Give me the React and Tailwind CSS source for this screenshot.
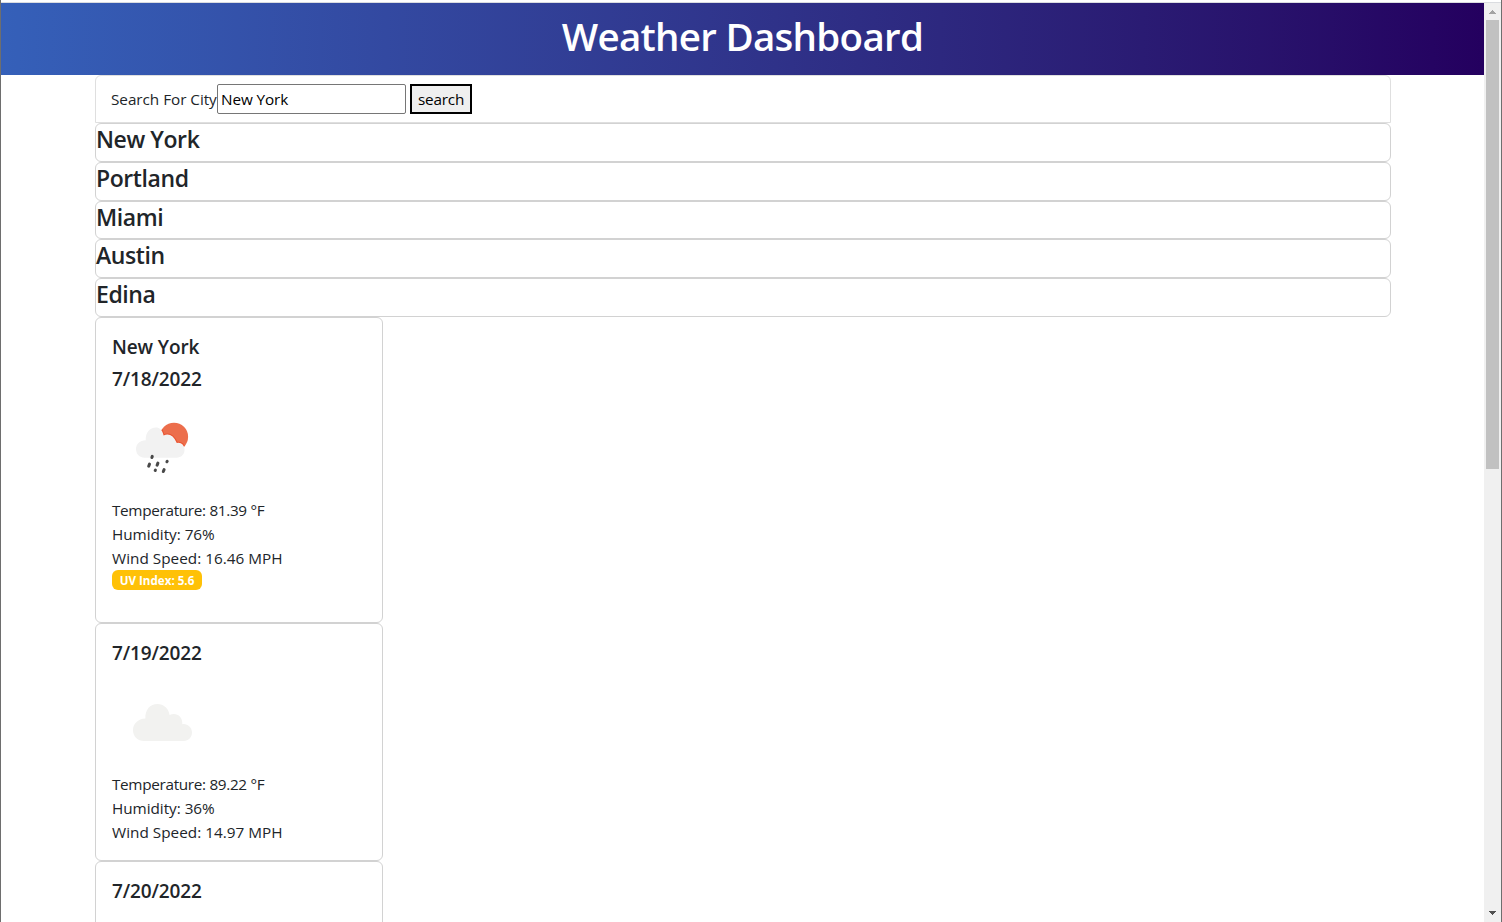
const cities = ["New York", "Portland", "Miami", "Austin", "Edina"];

const rainCloud =
  "M32.5 59.7C27.6 59.7 24 56 24 51C24 46 28 42.4 33.8 42.2C33.3 34.6 38 29.6 43.9 29.6C47.5 29.6 50.3 32 51.6 37.4Q59.8 33.8 64.8 44.9Q71.6 43.8 72.6 51.5C72.6 56.5 69 59.7 64.5 59.7Z";

function RainSunIcon() {
  return (
    <svg className="block size-[100px]" viewBox="0 0 100 100">
      <defs>
        <clipPath id="sun">
          <circle cx="62" cy="38.8" r="14.1" />
        </clipPath>
      </defs>
      <circle cx="62" cy="38.8" r="14.1" fill="#ec6e4c" />
      <path d={rainCloud} fill="none" stroke="#ea5330" strokeWidth="2.2" clipPath="url(#sun)" />
      <path d={rainCloud} fill="#f2f2f2" />
      <path
        d="M40.3 58.3 39.9 59.5M37.5 66.1 36.7 68.2M45.9 65.1 45.1 67.2M55.2 63.3 54.9 63.8M43.4 72.1 43.2 72.5M52.1 71.6 51.3 73.5"
        fill="none"
        stroke="#484848"
        strokeWidth="3"
        strokeLinecap="round"
      />
    </svg>
  );
}

function CloudIcon() {
  return (
    <svg className="block size-[100px]" viewBox="0 0 100 100">
      <path
        d="M32 69C25.8 69 21 64.4 21 58.2C21 52 25.8 47 33.4 46.6C32.8 38 38 32 45.6 32C51.5 32 56.5 36 57.6 43C63.5 39.8 71 43.8 70.3 52.2C75.5 51.5 80 55.4 80 60.6C80 65.4 76.5 69 71.8 69Z"
        fill="#f2f2f0"
      />
    </svg>
  );
}

function Readings({ temperature, humidity, wind }) {
  return (
    <div className="text-[15.3px] leading-6">
      <p className="tracking-[-0.32px]">Temperature: {temperature} °F</p>
      <p className="tracking-[-0.04px]">Humidity: {humidity}%</p>
      <p className="tracking-[0.02px]">Wind Speed: {wind} MPH</p>
    </div>
  );
}

function CardTitle({ children }) {
  return (
    <h5 className="mb-2 h-6 pt-px text-[19px] font-semibold leading-6 tracking-[-0.12px]">{children}</h5>
  );
}

function Scrollbar() {
  return (
    <div className="flex w-[17px] shrink-0 flex-col items-center bg-[#f0f0f0]">
      <div className="flex h-[17px] w-full items-center justify-center">
        <svg className="h-1 w-[7px]" viewBox="0 0 7 4" shapeRendering="crispEdges">
          <path d="M3 0h1v1h1v1h1v1h1v1H0V3h1V2h1V1h1z" fill="#a3a3a3" />
        </svg>
      </div>
      <div className="h-[449px] w-[13px] bg-[#c1c1c1]" />
      <div className="mt-auto flex h-[17px] w-full items-center justify-center">
        <svg className="mb-[2px] h-1 w-[7px]" viewBox="0 0 7 4" shapeRendering="crispEdges">
          <path d="M0 0h7v1H6v1H5v1H4v1H3V3H2V2H1V1H0z" fill="#505050" />
        </svg>
      </div>
    </div>
  );
}

export default function App() {
  return (
    <div className="flex h-[922px] w-[1502px] flex-col overflow-hidden border-x border-[#6e6e6e] bg-white font-['Open_Sans','Noto_Sans',sans-serif] text-[#212529]">
      <div className="h-[3px] shrink-0 border-b border-[#dadce0]" />
      <div className="flex min-h-0 flex-1">
        <div className="min-w-0 flex-1 overflow-hidden">
          <header className="flex h-[72px] justify-center bg-linear-to-r from-[#3560b9] to-[#24005f] pt-[9px]">
            <h1 className="text-[38.5px] font-semibold leading-[48px] tracking-[-0.72px] text-white">
              Weather Dashboard
            </h1>
          </header>
          <main className="ml-[94px] w-[1296px]">
            <div className="flex h-12 items-start rounded-t-[6px] border border-[#dfdfdf] pl-[15px] pt-2">
              <label htmlFor="city" className="w-[106px] whitespace-nowrap text-[15.3px] leading-[30px] tracking-[-0.04px]">
                Search For City
              </label>
              <input
                id="city"
                defaultValue="New York"
                className="h-[30px] w-[189px] rounded-[2px] border border-[#767676] px-[3px] text-[15.3px] tracking-[-0.1px] text-black"
              />
              <button className="ml-1 h-[30px] w-[62px] border-2 border-black bg-[#efefef] text-[15.3px] leading-[26px] tracking-[-0.2px] text-black">
                search
              </button>
            </div>
            {cities.map((city) => (
              <div key={city} className="h-[38.8px] rounded-[6px] border border-[#d2d2d2]">
                <h4 className="text-[23px] font-semibold leading-[30px] tracking-[-0.42px]">{city}</h4>
              </div>
            ))}
            <section className="h-[306px] w-[288px] rounded-[6px] border border-[#d2d2d2] p-4">
              <CardTitle>New York</CardTitle>
              <CardTitle>7/18/2022</CardTitle>
              <RainSunIcon />
              <Readings temperature="81.39" humidity="76" wind="16.46" />
              <span className="flex h-5 w-[90px] items-center justify-center whitespace-nowrap rounded-[6px] bg-[#ffc107] pt-px text-[11.6px] font-bold text-white">
                UV Index: 5.6
              </span>
            </section>
            <section className="h-[238px] w-[288px] rounded-[6px] border border-[#d2d2d2] p-4">
              <CardTitle>7/19/2022</CardTitle>
              <CloudIcon />
              <Readings temperature="89.22" humidity="36" wind="14.97" />
            </section>
            <section className="h-[238px] w-[288px] rounded-[6px] border border-[#d2d2d2] p-4">
              <CardTitle>7/20/2022</CardTitle>
            </section>
          </main>
        </div>
        <Scrollbar />
      </div>
    </div>
  );
}
